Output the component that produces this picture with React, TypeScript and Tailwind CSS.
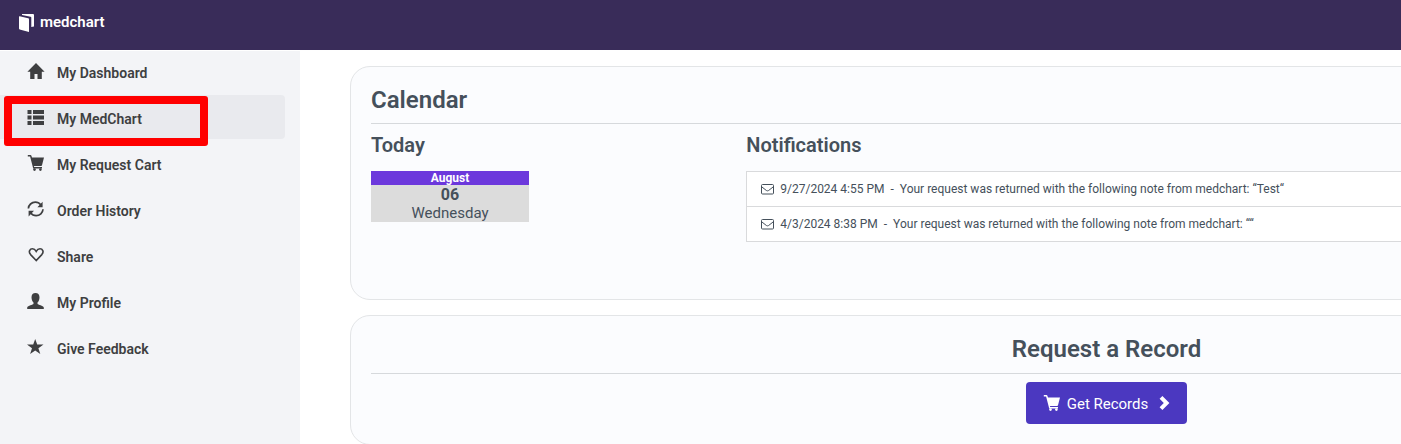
import React from 'react';

type GlyphProps = { className?: string };

const HomeGlyph = ({ className }: GlyphProps) => (
  <svg viewBox="0 0 18 16" className={className} fill="currentColor" aria-hidden="true">
    <path d="M9 0 .4 8.700h2.800V16h4.300v-5h3v5h4.300V8.700h2.800z" />
  </svg>
);

const ListGlyph = ({ className }: GlyphProps) => (
  <svg viewBox="0 0 18 16" className={className} fill="currentColor" aria-hidden="true">
    <path d="M.5 1h4v4h-4zM6 1h11v4H6zM.5 6.500h4v4h-4zM6 6.500h11v4H6zM.5 12h4v4h-4zM6 12h11v4H6z" />
  </svg>
);

const CartGlyph = ({ className }: GlyphProps) => (
  <svg viewBox="0 0 18 16" className={className} fill="currentColor" aria-hidden="true">
    <path d="M.8 0h2.700q.6 0 .8.600l.7 1.900H17l-2 7.700q-.2.700-.9.700H6.900l.3 1.100H15v1.400H6.200L3.100 1.500H.8z" />
    <circle cx="7.500" cy="14.600" r="1.300" />
    <circle cx="13.400" cy="14.600" r="1.300" />
  </svg>
);

const RefreshGlyph = ({ className }: GlyphProps) => (
  <svg viewBox="0 0 18 16" className={className} aria-hidden="true">
    <path
      d="M1.400 7.500C1.600 3.900 4.600 1.200 8.300 1.200c2.200 0 4.200 1 5.400 2.600M16 8.200c-.2 3.700-3.200 6.500-6.900 6.500-2.200 0-4.200-1-5.400-2.600"
      fill="none"
      stroke="currentColor"
      strokeWidth="1.7"
    />
    <path d="M15.600.8v5.400h-5.200zM1.600 15.400V9.800H7z" fill="currentColor" />
  </svg>
);

const HeartGlyph = ({ className }: GlyphProps) => (
  <svg viewBox="0 0 18 16" className={className} fill="none" stroke="currentColor" strokeWidth="1.6" aria-hidden="true">
    <path d="M9.200 13.500 3.600 7.600C1 4.600 3 1.800 5.400 1.800c1.800 0 3 1.200 3.800 2.600.8-1.400 2-2.600 3.800-2.600 2.400 0 4.400 2.800 1.800 5.800z" />
  </svg>
);

const UserGlyph = ({ className }: GlyphProps) => (
  <svg viewBox="0 0 18 16" className={className} fill="currentColor" aria-hidden="true">
    <path d="M8.500 0C6 0 4.500 1.600 4.500 4.200c0 2.600 1 4.500 2 5.400v1.200C6 11.900.8 12.600.2 14.400V16h16.600v-1.600c-.6-1.800-5.800-2.500-6.300-3.600V9.600c1-.9 2-2.800 2-5.400C12.500 1.600 11 0 8.500 0z" />
  </svg>
);

const StarGlyph = ({ className }: GlyphProps) => (
  <svg viewBox="0 0 18 16" className={className} fill="currentColor" aria-hidden="true">
    <path d="m8.200 0 2 5.400h6.300l-5.100 3.800 1.900 5.900-5.100-3.600-5.100 3.600 1.900-5.900L0 5.400h6.200z" />
  </svg>
);

const EnvelopeGlyph = ({ className }: GlyphProps) => (
  <svg viewBox="0 0 13 11" className={className} fill="none" stroke="currentColor" aria-hidden="true">
    <rect x=".5" y=".5" width="12" height="9.500" rx="1" />
    <path d="M.7 2.800 5.400 6.500q1.100.7 2.200 0l4.700-3.700" />
  </svg>
);

const ChevronGlyph = ({ className }: GlyphProps) => (
  <svg viewBox="0 0 11 14" className={className} fill="currentColor" aria-hidden="true">
    <path d="M3.400 0 10.400 7l-7 7L.6 11.200 4.800 7 .6 2.800z" />
  </svg>
);

const LogoMark = ({ className }: GlyphProps) => (
  <svg viewBox="0 0 16 18" className={className} fill="currentColor" aria-hidden="true">
    <path d="M.6 2.200 9.200 4.300q.8.200.8 1V18L.7 15.500q-.7-.2-.7-.9V2.700q0-.6.6-.5z" />
    <path d="M3 0H14q1 0 1 1v11.500l-2.700.6V3.800q0-.9-.8-1.100L3 1z" />
  </svg>
);

const navItems = [
  { label: 'My Dashboard', icon: HomeGlyph },
  { label: 'My MedChart', icon: ListGlyph, active: true },
  { label: 'My Request Cart', icon: CartGlyph },
  { label: 'Order History', icon: RefreshGlyph },
  { label: 'Share', icon: HeartGlyph },
  { label: 'My Profile', icon: UserGlyph },
  { label: 'Give Feedback', icon: StarGlyph },
];

const notifications = [
  { date: '9/27/2024 4:55 PM', note: 'Test' },
  { date: '4/3/2024 8:38 PM', note: '' },
];

const Sidebar = () => (
  <nav className="w-[300px] shrink-0 bg-[#f3f4f7]" aria-label="Main">
    <ul className="-mt-[2px] flex flex-col gap-[2px] pr-[15px]">
      {navItems.map(({ label, icon: Icon, active }) => (
        <li key={label} className="relative">
          <a
            href="#"
            className={`flex h-11 items-center gap-3 rounded-r pl-[27px] text-sm font-semibold text-[#3e3f41] ${active ? 'bg-[#e9eaee]' : ''}`}
          >
            <Icon className="h-4 w-[18px]" />
            <span className="pt-1">{label}</span>
          </a>
          {active && (
            <span className="pointer-events-none absolute top-px left-1 h-[50px] w-[204px] rounded-[3px] border-8 border-[#ff0000]" />
          )}
        </li>
      ))}
    </ul>
  </nav>
);

const CalendarCard = () => (
  <section className="min-h-[234px] rounded-[20px] border border-[#e3e5e7] bg-[#fbfcfe] px-5 pt-[17px]">
    <h2 className="border-b border-[#d6d9dc] pb-[7px] text-2xl font-semibold">Calendar</h2>
    <div className="grid grid-cols-4 gap-[30px] pt-[7px]">
      <div>
        <h3 className="text-xl font-semibold">Today</h3>
        <div className="mt-3 w-[158px] bg-[#dcdcdc] text-center">
          <div className="bg-[#6c38dc] text-xs leading-[14px] font-bold text-white">August</div>
          <div className="text-base leading-[19px] font-bold">06</div>
          <div className="text-[15px] leading-[18px]">Wednesday</div>
        </div>
      </div>
      <div className="col-span-3">
        <h3 className="text-xl font-semibold">Notifications</h3>
        <ul className="mt-3 divide-y divide-[#d9dadc] border border-[#d9dadc] bg-white text-xs">
          {notifications.map(({ date, note }) => (
            <li key={date} className="flex items-center px-[14px] py-[9px]">
              <EnvelopeGlyph className="mr-[6px] h-[11px] w-[13px]" />
              <span>{date}</span>
              <span className="px-[6px]">-</span>
              <span>Your request was returned with the following note from medchart: “{note}“</span>
            </li>
          ))}
        </ul>
      </div>
    </div>
  </section>
);

const RequestCard = () => (
  <section className="rounded-[20px] border border-[#e3e5e7] bg-[#fbfcfe] px-5 pt-[17px] pb-5 text-center">
    <h2 className="border-b border-[#d6d9dc] pb-2 text-2xl font-semibold">Request a Record</h2>
    <button
      type="button"
      className="mt-2 inline-flex h-[42px] items-center rounded bg-[#4b38c0] px-[17px] text-[15px] text-white"
    >
      <CartGlyph className="h-4 w-[18px]" />
      <span className="mr-[11px] ml-[6px] pt-[2px]">Get Records</span>
      <ChevronGlyph className="h-[14px] w-[11px]" />
    </button>
  </section>
);

const App: React.FC = () => {
  return (
    <div className="flex min-h-screen flex-col overflow-hidden bg-white font-['Roboto',sans-serif] text-[#45505b]">
      <header className="flex h-[51px] items-start border-b border-white bg-[#392c59] px-[19px] pt-[14px] text-white">
        <a href="#" className="flex items-start gap-[5px]">
          <LogoMark className="h-[18px] w-4" />
          <span className="text-[15px] leading-4 font-semibold">medchart</span>
        </a>
      </header>
      <div className="flex grow">
        <Sidebar />
        {/* dashboard keeps its full width and runs off the right edge on smaller windows */}
        <main className="flex min-w-[1578px] grow flex-col gap-[15px] pt-[15px] pr-[15px] pl-[50px]">
          <CalendarCard />
          <RequestCard />
        </main>
      </div>
    </div>
  );
};

export default App;
